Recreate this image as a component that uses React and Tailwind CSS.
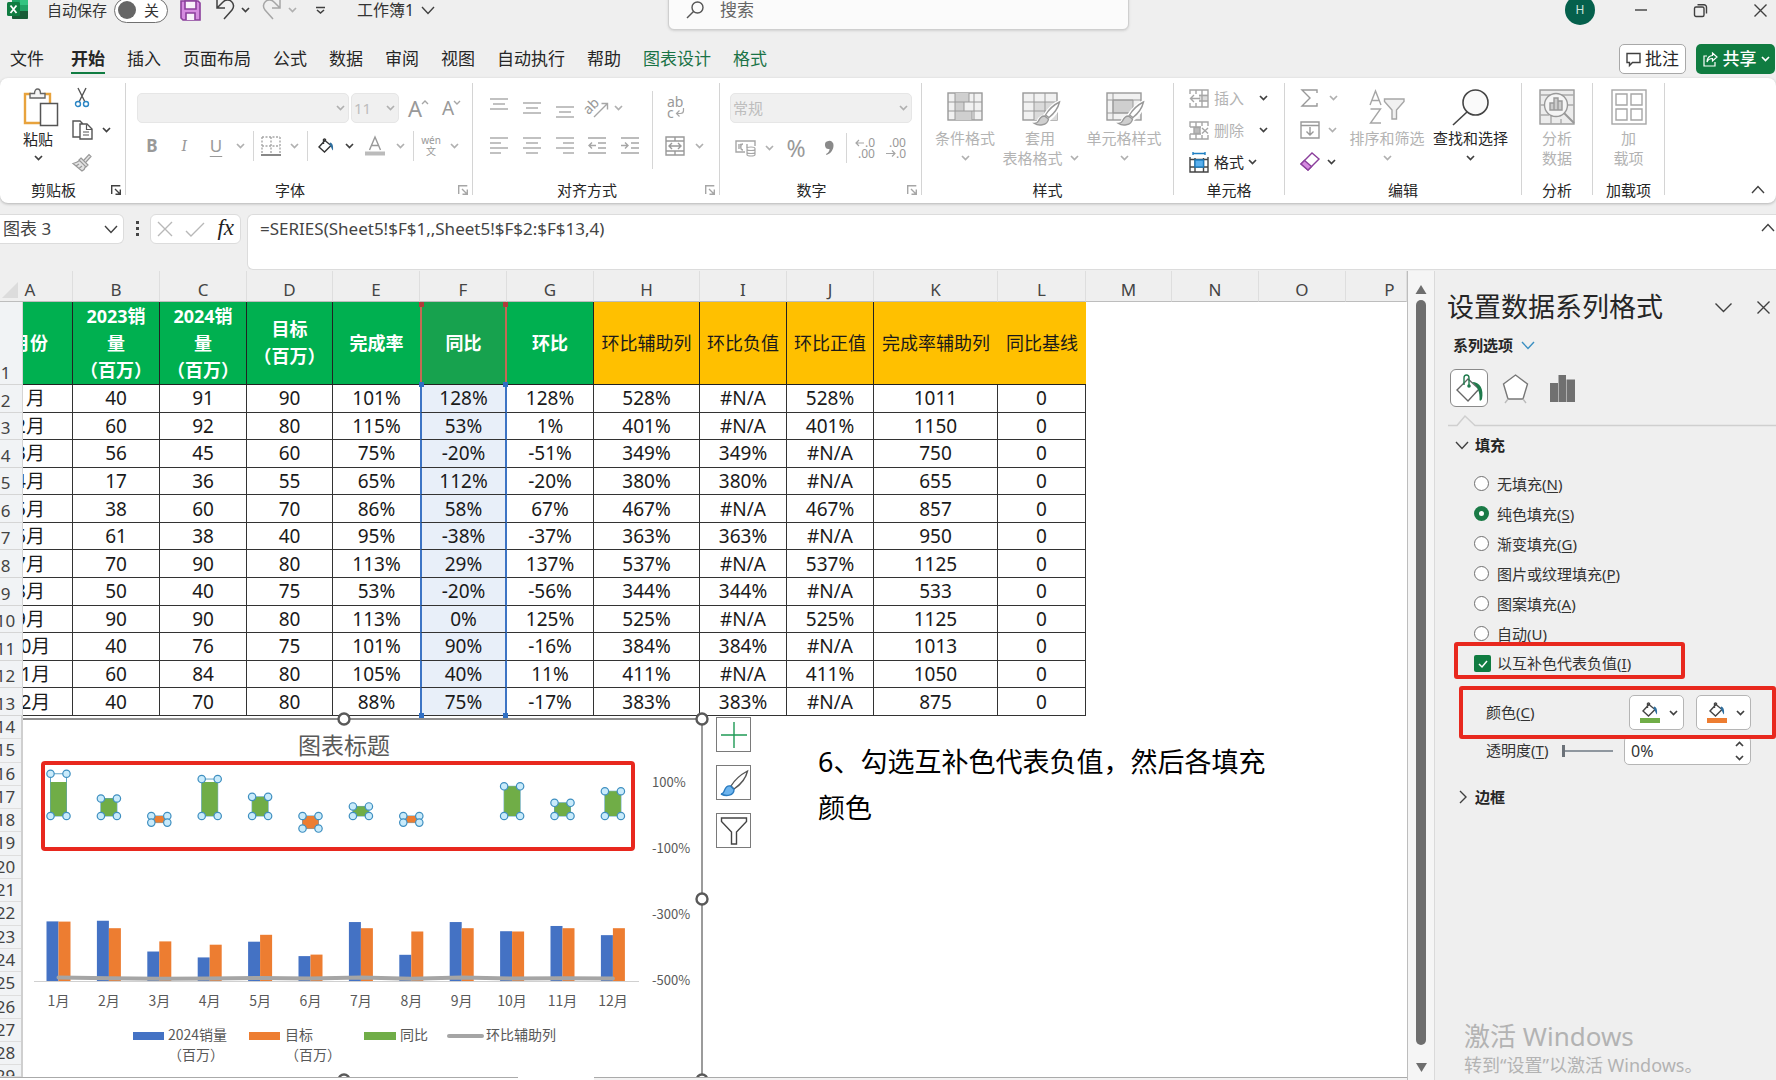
import React from "react";

const G = "#a6a6a6";
const D = "#404040";

function Svg({ w, h, children, className = "", vb }) {
  return (
    <svg
      width={w}
      height={h}
      viewBox={vb || `0 0 ${w} ${h}`}
      fill="none"
      stroke={G}
      strokeWidth="1.4"
      className={`shrink-0 overflow-visible ${className}`}
      aria-hidden="true"
    >
      {children}
    </svg>
  );
}

function Chev({ c = "#b0b0b0", big = false, up = false }) {
  const w = big ? 12 : 7;
  const h = big ? 7 : 4;
  return (
    <Svg w={w} h={h}>
      <path d={up ? `M0 ${h}L${w / 2} 0.5L${w} ${h}` : `M0 0L${w / 2} ${h - 0.5}L${w} 0`} stroke={c} strokeWidth={big ? 1.4 : 1.7} />
    </Svg>
  );
}

const Btn = ({ label, children, className = "" }) => (
  <button type="button" aria-label={label} className={`flex items-center justify-center ${className}`}>
    {children}
  </button>
);

const Sep = ({ className = "h-[30px]" }) => <span className={`w-px bg-[#d6d6d6] ${className}`} />;

function Group({ title, width, launcher, dark, children }) {
  return (
    <section aria-label={title} className={`flex h-[112px] shrink-0 flex-col border-r border-[#d4d4d4] ${width}`}>
      <div className="min-h-0 flex-1">{children}</div>
      <div className="flex h-[10px] items-center text-[15px] leading-[10px] text-[#262626]">
        <span className="flex-1 text-center">{title}</span>
        {launcher && (
          <Btn label={`${title}设置`} className="w-[18px]">
            <Svg w={10} h={10}>
              <path d="M0.7 9V0.7H9.3M4 4L9 9M9.3 4.5V9.3H4.5" stroke={dark ? D : G} />
            </Svg>
          </Btn>
        )}
      </div>
    </section>
  );
}

function BigButton({ icon, lines, chev, dark, width = "" }) {
  return (
    <button type="button" className={`flex flex-col items-center text-[15px] leading-5 whitespace-nowrap ${dark ? "text-[#262626]" : "text-[#b3b3b3]"} ${width}`}>
      <span className="mb-[3px] flex h-[37px] items-center">{icon}</span>
      <span>{lines[0]}</span>
      <span className="flex h-5 items-center gap-2">
        {lines[1]}
        {chev && <Chev c={dark ? D : "#b0b0b0"} />}
      </span>
    </button>
  );
}

function Lines({ rows, dy = 0 }) {
  return (
    <Svg w={18} h={18}>
      {rows.map(([a, b], i) => (
        <path key={i} d={`M${a} ${dy + i * 5 + 1}H${b}`} />
      ))}
    </Svg>
  );
}

const Bucket = ({ c = D }) => (
  <Svg w={17} h={17}>
    <path d="M7 2.5L1 9L6.5 14L13 7.5L7.5 3V1.5a1.5 1.5 0 0 0-2 0V6" stroke={c} />
    <path d="M12 4.5c2.500 .5 3.500 3 3 8-1.500-1-1.500-4-3.500-5.500z" fill="#2f6f9f" stroke="none" />
  </Svg>
);

/* ---------- title bar and tabs ---------- */

function TitleBar() {
  return (
    <header className="mb-5 grid h-5 grid-cols-[668fr_461fr_647fr] grid-rows-1 items-center text-[15px] text-[#333]">
      <div className="flex items-center">
        <Svg w={22} h={22} className="ml-[6px]">
          <path d="M6 -4h16v22a2 2 0 0 1-2 2H8a2 2 0 0 1-2-2z" fill="#21a366" stroke="none" />
          <path d="M14 -4h8v10h-8z" fill="#33c481" stroke="none" />
          <path d="M6 12h16v7a1 1 0 0 1-1 1H7a1 1 0 0 1-1-1z" fill="#185c37" stroke="none" />
          <rect x="1" y="3" width="13" height="14" rx="1.500" fill="#107c41" stroke="none" />
          <path d="M4.500 6.500l6 7.500M10.500 6.500l-6 7.500" stroke="#fff" strokeWidth="1.800" />
        </Svg>
        <label htmlFor="autosave" className="ml-[19px]">自动保存</label>
        <label className="relative ml-[7px] flex h-[25px] w-[54px] items-center justify-between rounded-full border border-[#707070] bg-white pr-2 pl-[3px]">
          <input id="autosave" type="checkbox" role="switch" className="peer sr-only" />
          <span className="size-[18px] rounded-full bg-[#666]" />
          <span>关</span>
        </label>
        <Btn label="保存" className="ml-3">
          <Svg w={21} h={21}>
            <path d="M1 1h17l2 2v17H3l-2-2z" fill="#d58be0" stroke="#8b3f9c" strokeWidth="1.600" />
            <path d="M5 1h11v8H5zM6 20v-7h9v7" fill="#f8f0fa" stroke="#8b3f9c" strokeWidth="1.600" />
          </Svg>
        </Btn>
        <Btn label="撤销" className="ml-[15px] gap-2">
          <Svg w={18} h={20}>
            <path d="M1 0V8H9M1 8L7 2a6 6 0 0 1 9 8L8 19" stroke={D} strokeWidth="1.500" />
          </Svg>
          <Chev c={D} />
        </Btn>
        <Btn label="恢复" className="ml-[14px] gap-2">
          <Svg w={18} h={20}>
            <path d="M17 0V8H9M17 8L11 2a6 6 0 0 0-9 8L10 19" strokeWidth="1.500" />
          </Svg>
          <Chev />
        </Btn>
        <Btn label="自定义快速访问工具栏" className="ml-5">
          <Svg w={9} h={7}>
            <path d="M0 0.500H9M1 3L4.500 6L8 3" stroke={D} strokeWidth="1.600" />
          </Svg>
        </Btn>
        <button type="button" className="ml-[32px] flex items-center gap-2 text-base whitespace-nowrap">
          工作簿1 <Chev big c={D} />
        </button>
      </div>
      <label className="flex h-10 items-center gap-4 rounded-md border border-[#cfcfcf] bg-[#fbfbfb] pl-[17px] text-[17px] shadow-sm">
        <Svg w={18} h={18}>
          <circle cx="11.500" cy="6.500" r="5.500" stroke="#555" />
          <path d="M7.500 10.500L1 17" stroke="#555" />
        </Svg>
        <input type="search" aria-label="搜索" placeholder="搜索" className="min-w-0 flex-1 bg-transparent outline-none placeholder:text-[#666]" />
      </label>
      <div className="flex items-center justify-end pr-[9px]">
        <span className="mr-[39px] flex size-[30px] items-center justify-center rounded-full bg-[#05604c] text-xs text-[#cfe6df]">H</span>
        <Btn label="最小化" className="mr-[46px]">
          <Svg w={14} h={14}><path d="M1 7H13" stroke={D} /></Svg>
        </Btn>
        <Btn label="还原" className="mr-[47px]">
          <Svg w={13} h={13}>
            <rect x="0.500" y="3" width="9.500" height="9.500" rx="1.500" stroke={D} />
            <path d="M3.500 .7H10a2.500 2.500 0 0 1 2.500 2.500V9.500" stroke={D} />
          </Svg>
        </Btn>
        <Btn label="关闭">
          <Svg w={13} h={13}><path d="M.5 .5L12.500 12.500M12.500 .5L.5 12.500" stroke={D} /></Svg>
        </Btn>
      </div>
    </header>
  );
}

const tabs = ["插入", "页面布局", "公式", "数据", "审阅", "视图", "自动执行", "帮助"];

function Tabs() {
  return (
    <nav className="flex h-[38px] items-center text-[17px] leading-[26px] whitespace-nowrap text-[#262626]">
      <a href="#file" className="mr-[27px] ml-[10px]">文件</a>
      <a href="#home" aria-current="page" className="mr-[22px] -mb-[2px] border-b-2 border-[#107c41] font-bold">开始</a>
      <div className="flex gap-[22px]">
        {tabs.map((t) => (
          <a key={t} href={`#${t}`}>{t}</a>
        ))}
        <a href="#design" className="text-[#1a7346]">图表设计</a>
        <a href="#format" className="text-[#1a7346]">格式</a>
      </div>
      <button type="button" className="mr-[10px] ml-auto flex h-[30px] w-[67px] items-center justify-center gap-1 rounded-[5px] border border-[#a8a8a8] bg-white">
        <Svg w={15} h={15}>
          <path d="M1 1.500H14V10.500H6.500L3.500 13.500V10.500H1z" stroke={D} />
        </Svg>
        批注
      </button>
      <button type="button" className="mr-px flex h-[30px] w-[79px] items-center justify-center gap-[5px] rounded-[5px] bg-[#107c41] font-medium text-white">
        <Svg w={15} h={15}>
          <path d="M4 4H1V14H12V10M9.500 1L14 5L9.500 9V6.500C7 6.500 5 7.500 4 10C4 6 6.500 3.500 9.500 3.500z" stroke="#fff" strokeWidth="1.200" />
        </Svg>
        共享
        <Chev c="#fff" />
      </button>
    </nav>
  );
}

/* ---------- ribbon ---------- */

const GridIcon = ({ brush, variant }) => (
  <Svg w={36} h={34}>
    <rect x="1" y="3" width="34" height="27" fill="#f1f1f1" stroke="#999" />
    {variant === "cond" && (
      <>
        <path d="M8 3h14v9H8zM8 12h9v9H8zM8 21h17v9H8z" fill="#cfcfcf" stroke="none" />
        <path d="M8 3V30M22 3V12H35M27 3V30M1 12H22M1 21H35M17 12V21M25 21V30" stroke="#999" strokeWidth="1" />
      </>
    )}
    {variant === "table" && (
      <>
        <path d="M12 12h23v18H12z" fill="#dadada" stroke="none" />
        <path d="M12 3V30M23 3V30M1 12H35M1 21H35" stroke="#999" strokeWidth="1" />
      </>
    )}
    {variant === "cell" && (
      <>
        <path d="M7 10h20v13H7z" fill="#cfcfcf" stroke="#999" strokeWidth="1" />
        <path d="M7 3V30M1 10H35M1 23H22" stroke="#999" strokeWidth="1" />
      </>
    )}
    {brush && (
      <>
        <path d="M38 12c-6 2-12 9-16 15-4 0-5 3-6 6-2 3-4 2-4 3 8 1 14 0 14-6 5-4 10-10 12-18z" fill="#fff" stroke="#fff" strokeWidth="4" />
        <path d="M37.500 12c-6 3-11 8-14 13l3.500 2.500c5-4 9-9 10.500-15.500z" fill="#fff" stroke="#999" />
        <path d="M22.500 26c-4 0-5 3-6 5-1 2-2.500 2.500-4 2.500 3 2 13 3 14-4.500z" fill="#cfcfcf" stroke="#999" />
      </>
    )}
  </Svg>
);

function CellIcon({ kind }) {
  const blue = kind === "format";
  const c = blue ? "#444" : G;
  return (
    <Svg w={20} h={19}>
      {kind === "insert" && (
        <>
          <path d="M10 5.500h9v7h-9z" fill="#dcdcdc" stroke="none" />
          <path d="M1 5V1H19V18H1V14M7 1V5M7 14V18M13 1V18M10 6.500H19M10 12H19" stroke={c} />
          <path d="M11 9.500H1.500M5 6L1.500 9.500L5 13" stroke={c} />
        </>
      )}
      {kind === "delete" && (
        <>
          <path d="M1 6V1H19V5M1 6H12M1 13V18H19V14M1 13H12M7 1V6M13 1V5M7 13V18M13 14V18" stroke={c} />
          <path d="M5 6.500h6v6H5z" fill="#bbb" stroke={c} />
          <path d="M13 7l6 5.500M19 7l-6 5.500" stroke={c} />
        </>
      )}
      {blue && (
        <>
          <path d="M1 4V19H19V4M1 6.500H19M1 14H19M6 5V19M14.500 5V19" stroke={c} />
          <path d="M6 7h8.500v7H6z" fill="#5bb0ee" stroke="#1e7fc2" />
          <path d="M4 .5H16M4 -1V2M16 -1V2" stroke="#1e7fc2" />
        </>
      )}
    </Svg>
  );
}

function Ribbon() {
  return (
    <div className="flex h-[125px] rounded-lg bg-white pt-[5px] shadow-[0_1px_3px_rgba(0,0,0,0.25)]">
      <Group title="剪贴板" width="w-[126px]" launcher dark>
        <div className="flex">
          <div className="pt-[5px] pl-[23px]">
            <button type="button" className="flex w-9 flex-col items-start text-[15px] leading-5 text-[#262626]">
              <Svg w={36} h={38} className="mb-[3px]">
                <path d="M8 6H2V35H17M21 6h6v9" stroke="#e8a33d" strokeWidth="2.400" />
                <path d="M7 10V5.500h4.500C11.500 2.500 13 1 14.500 1S17.500 2.500 17.500 5.500H22V10z" fill="#f5f5f5" stroke="#666" />
                <rect x="17.500" y="15.500" width="17" height="22" fill="#fff" stroke="#555" strokeWidth="1.500" />
              </Svg>
              <span>粘贴</span>
              <span className="flex h-[18px] w-[31px] items-center justify-center"><Chev c={D} /></span>
            </button>
          </div>
          <div className="-mt-px ml-[11px] flex flex-col items-start">
            <Btn label="剪切" className="h-8 w-6">
              <Svg w={14} h={20}>
                <path d="M3 0L10 14M11 0L4 14" stroke="#555" />
                <circle cx="3" cy="16" r="2.500" stroke="#2b86c5" />
                <circle cx="11" cy="16" r="2.500" stroke="#2b86c5" />
              </Svg>
            </Btn>
            <Btn label="复制" className="h-8 gap-[10px]">
              <Svg w={21} h={20} className="ml-[2px]">
                <path d="M8 17H1V1H8L11 4M8 4H15L20 9V19H8z" stroke="#555" />
                <path d="M14.500 4.500V9.500H20M11 12H17M11 15H17" stroke="#555" strokeWidth="1.200" />
              </Svg>
              <Chev c={D} />
            </Btn>
            <Btn label="格式刷" className="h-8 w-6">
              <Svg w={20} h={19}>
                <path d="M12 7L17 1.500L19 3.500L14 9M9 5L16 12L14 14L7 7zM7.500 7.500C5 9.500 3 10 1 10.500L10 18C12 17 13 15.500 13.500 13.500M4 13L7 11M7 15.500L10 13" fill="#e3e3e3" stroke="#999" strokeWidth="1.200" />
              </Svg>
            </Btn>
          </div>
        </div>
      </Group>

      <Group title="字体" width="w-[347px]" launcher>
        <div className="flex h-10 items-center pt-[10px] pl-[11px]">
          <Combo label="字体" value="" width="w-[212px]" />
          <Combo label="字号" value="11" width="ml-[2px] w-12" />
          <Btn label="增大字号" className="ml-[9px] items-start text-[22px] leading-6 text-[#999]">A<Svg w={6} h={5} className="mt-1"><path d="M0 4L3 1L6 4" /></Svg></Btn>
          <Btn label="减小字号" className="ml-[14px] items-start text-[19px] leading-6 text-[#999]">A<Svg w={6} h={5} className="mt-1"><path d="M0 1L3 4L6 1" /></Svg></Btn>
        </div>
        <div className="mt-2 grid h-[30px] grid-cols-[32px_32px_32px_16px_10px_26px_20px_6px_32px_14px_38px_12px_14px_22px_24px] place-items-center pl-[10px] text-[17px] text-[#999]">
          <Btn label="加粗" className="font-bold">B</Btn>
          <Btn label="倾斜" className="font-serif italic">I</Btn>
          <Btn label="下划线" className="underline underline-offset-4">U</Btn>
          <Chev />
          <Sep />
          <Btn label="边框">
            <Svg w={20} h={20}>
              <path d="M1 1H19M1 10H19M1 1V18M10 1V18M19 1V18" strokeDasharray="2 1.500" />
              <path d="M0 19H20" stroke="#888" strokeWidth="2" />
            </Svg>
          </Btn>
          <Chev />
          <Sep />
          <Btn label="填充颜色"><Bucket c="#333" /></Btn>
          <Chev c={D} />
          <Btn label="字体颜色">
            <Svg w={20} h={20}>
              <path d="M4.500 14L10 1L15.500 14M6.500 9.500H13.500" stroke="#999" />
              <path d="M0 17.500H20" stroke="#bbb" strokeWidth="4" />
            </Svg>
          </Btn>
          <Chev />
          <Sep />
          <Btn label="拼音指南" className="flex-col text-[10px] leading-[11px]"><span>wén</span><span>文</span></Btn>
          <Chev />
        </div>
      </Group>

      <Group title="对齐方式" width="w-[247px]" launcher>
        <div className="flex">
          <div className="pt-[10px] pl-[10px]">
            <div className="grid h-[30px] grid-cols-[32px_33px_33px_32px_10px] place-items-center">
              <Btn label="顶端对齐"><Lines rows={[[0, 18], [3, 15], [0, 18]]} dy={-1} /></Btn>
              <Btn label="垂直居中"><Lines rows={[[0, 18], [3, 15], [0, 18]]} dy={3} /></Btn>
              <Btn label="底端对齐"><Lines rows={[[0, 18], [3, 15], [0, 18]]} dy={7} /></Btn>
              <Btn label="方向">
                <Svg w={21} h={20}>
                  <text x="-2" y="13" transform="rotate(-45 5 11)" fill="#999" stroke="none" fontSize="14" fontFamily="Noto Sans">ab</text>
                  <path d="M7 19L20 6M14.500 5.500H20.500V11.500" />
                </Svg>
              </Btn>
              <Chev />
            </div>
            <div className="mt-2 grid h-[30px] grid-cols-[32px_33px_33px_32px_33px] place-items-center">
              <Btn label="左对齐"><Lines rows={[[0, 18], [0, 11], [0, 18], [0, 11]]} /></Btn>
              <Btn label="居中"><Lines rows={[[0, 18], [3, 15], [0, 18], [3, 15]]} /></Btn>
              <Btn label="右对齐"><Lines rows={[[0, 18], [7, 18], [0, 18], [7, 18]]} /></Btn>
              <Btn label="减少缩进量">
                <Svg w={18} h={18}><path d="M0 1H18M10 6H18M10 11H18M0 16H18M8 8.500H1M4 5.500L1 8.500L4 11.500" /></Svg>
              </Btn>
              <Btn label="增加缩进量">
                <Svg w={18} h={18}><path d="M0 1H18M10 6H18M10 11H18M0 16H18M0 8.500H7M4 5.500L7 8.500L4 11.500" /></Svg>
              </Btn>
            </div>
          </div>
          <Sep className="mt-2 ml-[6px] h-[78px]" />
          <div className="pt-[10px] pl-[10px]">
            <Btn label="自动换行" className="h-[30px] w-[26px]">
              <Svg w={18} h={22}>
                <text x="0" y="10" fill="#999" stroke="none" fontSize="14" fontFamily="Noto Sans">ab</text>
                <text x="0" y="21" fill="#999" stroke="none" fontSize="14" fontFamily="Noto Sans">c</text>
                <path d="M16.500 11v2.500q0 3-3 3H9.500M12.500 13.500L9.500 16.500L12.500 19.500" strokeWidth="1.200" />
              </Svg>
            </Btn>
            <div className="mt-2 flex h-[30px] items-center">
              <Btn label="合并后居中" className="w-6 gap-3">
                <Svg w={20} h={20}>
                  <path d="M1 1H19V19H1zM1 5H19M1 15H19M10 1V5M10 15V19M4 10H16M7 7L4 10L7 13M13 7L16 10L13 13" stroke="#999" />
                </Svg>
              </Btn>
              <span className="ml-[9px]"><Chev /></span>
            </div>
          </div>
        </div>
      </Group>

      <Group title="数字" width="w-[202px]" launcher>
        <div className="flex h-10 items-center pt-[10px] pl-[10px]">
          <Combo label="数字格式" value="常规" width="w-[182px]" />
        </div>
        <div className="mt-2 grid h-[30px] grid-cols-[30px_18px_36px_30px_4px_33px_30px] place-items-center pl-[10px] text-[#999]">
          <Btn label="会计数字格式">
            <Svg w={21} h={17}>
              <path d="M10 12H1V1H20V6M4 4v5M7 4.500H5M8 10c-3 0-3-6 0-6M12 4v4" />
              <path d="M12 8.500c0-2 8-2 8 0v6c0 2-8 2-8 0zM12 9c0 2 8 2 8 0M12 12c0 2 8 2 8 0" fill="#fff" strokeWidth="1.200" />
            </Svg>
          </Btn>
          <Chev />
          <Btn label="百分比样式" className="text-[23px]">%</Btn>
          <Btn label="千位分隔样式">
            <Svg w={10} h={16}>
              <path d="M4.500 1a4 4 0 0 1 5 4.500c0 4-2.500 8-7 9.500l-.5-1c2.500-1.200 3.500-3 3.500-5A4 4 0 0 1 4.500 1z" fill="#8a8a8a" stroke="none" />
            </Svg>
          </Btn>
          <Sep />
          <Btn label="增加小数位数">
            <Svg w={20} h={20}>
              <path d="M9 5H1M4 2L1 5L4 8" strokeWidth="1.200" />
              <text x="10" y="9" fill="#999" stroke="none" fontSize="12" fontFamily="Noto Sans">.0</text>
              <text x="3" y="20" fill="#999" stroke="none" fontSize="12" fontFamily="Noto Sans">.00</text>
            </Svg>
          </Btn>
          <Btn label="减少小数位数">
            <Svg w={20} h={20}>
              <path d="M0 15.500H9M6 12.500L9 15.500L6 18.500" strokeWidth="1.200" />
              <text x="3" y="9" fill="#999" stroke="none" fontSize="12" fontFamily="Noto Sans">.00</text>
              <text x="10" y="20" fill="#999" stroke="none" fontSize="12" fontFamily="Noto Sans">.0</text>
            </Svg>
          </Btn>
        </div>
      </Group>

      <Group title="样式" width="w-[252px]">
        <div className="flex pt-[5px] pl-[12px]">
          <BigButton icon={<GridIcon variant="cond" />} lines={["条件格式"]} chev width="w-[62px]" />
          <BigButton icon={<GridIcon variant="table" brush />} lines={["套用", "表格格式"]} chev width="w-[88px]" />
          <BigButton icon={<GridIcon variant="cell" brush />} lines={["单元格样式"]} chev width="w-[80px]" />
        </div>
      </Group>

      <Group title="单元格" width="w-[111px]">
        <div className="-mt-px flex flex-col pl-[15px] text-[15px]">
          {[["insert", "插入", "gap-4"], ["delete", "删除", "gap-4"], ["format", "格式", "gap-[5px] text-[#262626]"]].map(([k, t, cls]) => (
            <button key={k} type="button" className="flex h-8 items-center gap-[5px] text-[#b3b3b3]">
              <CellIcon kind={k} />
              <span className={`flex items-center ${cls}`}>{t}<Chev c={D} /></span>
            </button>
          ))}
        </div>
      </Group>

      <Group title="编辑" width="w-[237px]">
        <div className="flex">
          <div className="-mt-px flex w-[60px] flex-col pl-[15px]">
            <Btn label="求和" className="h-8 justify-start gap-[10px]">
              <Svg w={20} h={18}><path d="M17 4V1H2L10 9L2 17H17V14" stroke="#999" /></Svg>
              <Chev />
            </Btn>
            <Btn label="填充" className="h-8 justify-start gap-[9px]">
              <Svg w={20} h={18}><path d="M1 1H19V17H1zM1 4.500H19M10 6V14M6.500 10.500L10 14L13.500 10.500" stroke="#999" /></Svg>
              <Chev />
            </Btn>
            <Btn label="清除" className="h-8 justify-start gap-2">
              <Svg w={20} h={20}>
                <path d="M1 12L12 1L19 7L8 18z" fill="#fff" stroke="#8b3f9c" />
                <path d="M1 12L4.500 8.500L11.500 14.500L8 18z" fill="#d58be0" stroke="#8b3f9c" />
              </Svg>
              <Chev c={D} />
            </Btn>
          </div>
          <div className="flex pt-[5px]">
            <BigButton
              icon={
                <Svg w={36} h={34}>
                  <path d="M1 15L6.500 1L12 15M3 10.500H10M1.500 19H11.500L1.500 33H12" />
                  <path d="M15.500 9H35V11.500L27.500 20V29H23V20L15.500 11.500z" fill="#f1f1f1" />
                </Svg>
              }
              lines={["排序和筛选"]}
              chev
              width="w-[84px]"
            />
            <BigButton
              dark
              icon={
                <Svg w={36} h={36}>
                  <circle cx="22.500" cy="13.500" r="12.500" fill="#fafafa" stroke="#444" strokeWidth="1.600" />
                  <path d="M14 23L0 36" stroke="#444" strokeWidth="1.600" />
                </Svg>
              }
              lines={["查找和选择"]}
              chev
              width="w-[83px]"
            />
          </div>
        </div>
      </Group>

      <Group title="分析" width="w-[71px]">
        <div className="flex justify-center pt-[5px]">
          <BigButton
            icon={
              <Svg w={36} h={36}>
                <rect x="1" y="1" width="34" height="34" fill="#ececec" stroke="#999" />
                <path d="M1 6H35M1 16H6M29 16H35M1 26H10M12 27V35M22 30V35" stroke="#aaa" />
                <circle cx="17" cy="16" r="11.500" fill="#f5f5f5" stroke="#999" />
                <path d="M25 24L35 34" stroke="#999" strokeWidth="2" />
                <path d="M11 14h4v7h-4zM15 9h4v12h-4zM19 12h4v9h-4z" fill="#ccc" stroke="#999" />
              </Svg>
            }
            lines={["分析", "数据"]}
          />
        </div>
      </Group>

      <Group title="加载项" width="w-[72px]">
        <div className="flex justify-center pt-[5px]">
          <BigButton
            icon={
              <Svg w={36} h={36}>
                <rect x="1" y="1" width="34" height="34" />
                <path d="M5 5h11v11H5zM20 5h11v11H20zM5 20h11v11H5zM20 20h11v11H20z" />
              </Svg>
            }
            lines={["加", "载项"]}
          />
        </div>
      </Group>

      <Btn label="折叠功能区" className="mr-3 mb-[10px] ml-auto self-end">
        <Chev big up c={D} />
      </Btn>
    </div>
  );
}

function Combo({ label, value, width }) {
  return (
    <span className={`flex h-[30px] items-center rounded-[5px] border border-[#e6e6e6] bg-[#f0f0f0] pr-1 ${width}`}>
      <select aria-label={label} disabled defaultValue={value} className="min-w-0 flex-1 appearance-none bg-transparent pl-[2px] text-[15px] text-[#bdbdbd] opacity-100 outline-none">
        <option value={value}>{value}</option>
      </select>
      <Chev />
    </span>
  );
}

function FormulaBar() {
  return (
    <div className="flex h-[68px] items-start pt-[11px] text-[17px] text-[#444]">
      <div className="flex h-[30px] w-[124px] items-center rounded-r-md border border-l-0 border-[#dcdcdc] bg-white pr-[6px]">
        <input aria-label="名称框" defaultValue="图表 3" className="min-w-0 flex-1 pl-[3px] outline-none" />
        <Btn label="名称列表"><Chev big c={D} /></Btn>
      </div>
      <Svg w={3} h={30} className="mx-3">
        <path d="M0 8.500H3M0 14.500H3M0 20.500H3" stroke="#444" strokeWidth="3" />
      </Svg>
      <div className="-ml-px flex h-[30px] w-[91px] items-center justify-between rounded-md border border-[#dcdcdc] bg-white px-[6px]">
        <Btn label="取消"><Svg w={16} h={16}><path d="M1 1L15 15M15 1L1 15" stroke="#b8b8b8" /></Svg></Btn>
        <Btn label="输入"><Svg w={20} h={15}><path d="M1 9L6 14L19 1" stroke="#b8b8b8" /></Svg></Btn>
        <Btn label="插入函数" className="pb-1 font-['Liberation_Serif',serif] text-[23px] leading-none text-[#222] italic">fx</Btn>
      </div>
      <div className="ml-[6px] flex h-[56px] flex-1 items-start rounded-l-md border border-r-0 border-[#dcdcdc] bg-white pr-[2px]">
        <input aria-label="编辑栏" defaultValue="=SERIES(Sheet5!$F$1,,Sheet5!$F$2:$F$13,4)" className="h-[27px] min-w-0 flex-1 pl-3 outline-none" />
        <Btn label="折叠编辑栏" className="mt-[9px]"><Chev big up c={D} /></Btn>
      </div>
    </div>
  );
}

/* ---------- sheet ---------- */

const letters = "ABCDEFGHIJKLMNOP".split("");
const widths = ["w-[50px]", "w-[87px]", "w-[87px]", "w-[86px]", "w-[87px]", "w-[87px]", "w-[87px]", "w-[106px]", "w-[87px]", "w-[87px]", "w-[124px]", "w-[88px]", "w-[86px]", "w-[87px]", "w-[87px]", ""];
const heads = [["月份"], ["2023销", "量", "（百万）"], ["2024销", "量", "（百万）"], ["目标", "（百万）"], ["完成率"], ["同比"], ["环比"], ["环比辅助列"], ["环比负值"], ["环比正值"], ["完成率辅助列"], ["同比基线"]];
const NA = "#N/A";
const data = [
  ["1月", 40, 91, 90, "101%", "128%", "128%", "528%", NA, "528%", 1011, 0],
  ["2月", 60, 92, 80, "115%", "53%", "1%", "401%", NA, "401%", 1150, 0],
  ["3月", 56, 45, 60, "75%", "-20%", "-51%", "349%", "349%", NA, 750, 0],
  ["4月", 17, 36, 55, "65%", "112%", "-20%", "380%", "380%", NA, 655, 0],
  ["5月", 38, 60, 70, "86%", "58%", "67%", "467%", NA, "467%", 857, 0],
  ["6月", 61, 38, 40, "95%", "-38%", "-37%", "363%", "363%", NA, 950, 0],
  ["7月", 70, 90, 80, "113%", "29%", "137%", "537%", NA, "537%", 1125, 0],
  ["8月", 50, 40, 75, "53%", "-20%", "-56%", "344%", "344%", NA, 533, 0],
  ["9月", 90, 90, 80, "113%", "0%", "125%", "525%", NA, "525%", 1125, 0],
  ["10月", 40, 76, 75, "101%", "90%", "-16%", "384%", "384%", NA, 1013, 0],
  ["11月", 60, 84, 80, "105%", "40%", "11%", "411%", NA, "411%", 1050, 0],
  ["12月", 40, 70, 80, "88%", "75%", "-17%", "383%", "383%", NA, 875, 0],
];

const RowNo = ({ n }) => <div className="-ml-3 w-[35px] text-center text-[17px] leading-[22px] font-normal text-[#444]">{n}</div>;

const Handles = ({ color, top }) => (
  <>
    <i className={`absolute -left-[3px] z-10 size-[5px] ${top ? "top-0" : "-bottom-[3px]"} ${color}`} />
    <i className={`absolute -right-[3px] z-10 size-[5px] ${top ? "top-0" : "-bottom-[3px]"} ${color}`} />
  </>
);

function SheetTable() {
  return (
    <table className="h-[445px] w-full shrink-0 table-fixed border-separate border-spacing-0 text-center text-[18px] leading-5 text-[#1a1a1a]">
      <colgroup>
        <col className="w-[23px]" />
        {widths.map((w, i) => (
          <col key={i} className={w} />
        ))}
      </colgroup>
      <thead>
        <tr className="text-[17px] text-[#444]">
          <th aria-label="全选" className="h-[31px] border-b border-[#bdbdbd] bg-[#efefef] align-bottom">
            <Svg w={20} h={17} className="mb-[2px]"><path d="M18 0V16H2z" fill="#dcdcdc" stroke="none" /></Svg>
          </th>
          {letters.map((l, i) => (
            <th key={l} scope="col" className="h-[31px] overflow-hidden border-r border-b border-r-[#dedede] border-b-[#bdbdbd] bg-[#efefef] pt-2 font-normal">
              <div className={i === 0 ? "-ml-9 w-[86px]" : i === 15 ? "w-[87px]" : ""}>{l}</div>
            </th>
          ))}
        </tr>
      </thead>
      <tbody>
        <tr>
          <th scope="row" className="h-[83px] overflow-hidden border-r border-b border-[#d5d5d5] bg-[#f1f3f5] align-bottom"><RowNo n={1} /></th>
          {heads.map((h, i) => (
            <th
              key={i}
              scope="col"
              className={`h-[83px] border-b border-b-[#222] leading-[27px] whitespace-nowrap ${
                i === 5 ? "relative border-x-2 border-x-[#c46a55] bg-[#17a24e] font-bold text-white" : i < 7 ? "bg-[#00b050] font-bold text-white" : "bg-[#ffc000] font-normal"
              } ${i === 0 ? "overflow-hidden" : ""} ${i !== 5 && i !== 4 && i < 10 ? "border-r border-r-[#222]" : ""}`}
            >
              <div className={i === 0 ? "-ml-9 w-[86px]" : "-mx-2"}>
                {h.map((t) => (
                  <div key={t}>{t}</div>
                ))}
              </div>
              {i === 5 && <><Handles top color="bg-[#b03a3a]" /><Handles color="bg-[#2f6fc4]" /></>}
            </th>
          ))}
          <td colSpan={4} className="bg-white" />
        </tr>
        {data.map((row, r) => (
          <tr key={r}>
            <th scope="row" className="overflow-hidden border-r border-b border-[#d5d5d5] bg-[#f1f3f5] align-bottom"><RowNo n={r + 2} /></th>
            {row.map((v, i) => (
              <td
                key={i}
                className={`border-b border-b-[#333] text-[19px] ${i === 5 ? "relative border-x-2 border-x-[#3d74c4] bg-[#e8eff9]" : "bg-white"} ${
                  i === 0 ? "overflow-hidden" : ""
                } ${i !== 5 && i !== 4 ? "border-r border-r-[#333]" : ""}`}
              >
                <div className={i === 0 ? "-ml-9 w-[86px]" : ""}>{v}</div>
                {i === 5 && r === 11 && <Handles color="bg-[#2f6fc4]" />}
              </td>
            ))}
            <td colSpan={4} className="bg-white" />
          </tr>
        ))}
      </tbody>
    </table>
  );
}

function Chart() {
  const cx = (i) => 58.5 + i * 50.4;
  const pct = (s) => parseInt(s, 10);
  return (
    <svg width="690" height="361" viewBox="23 716 690 361" className="relative shrink-0 overflow-visible font-['Noto_Sans_CJK_SC',sans-serif]" role="img" aria-label="图表标题">
      <path d="M23 719H702" stroke="#8f8f8f" strokeWidth="2" />
      <path d="M702 719V1080" stroke="#7a7a7a" strokeWidth="1.500" />
      <text x="344" y="754" textAnchor="middle" fontSize="23" fill="#595959">图表标题</text>
      <path d="M34 981.500H639" stroke="#d0d0d0" />
      {data.map((row, i) => {
        const v = pct(row[5]);
        const x = cx(i);
        const top = v > 0 ? 816 - v * 0.33 : 816;
        const bottom = v > 0 ? 816 : 816 - v * 0.33;
        const fillTop = Math.max(top, 782);
        return (
          <g key={i}>
            {v !== 0 && (
              <g stroke="#5fa3c7">
                <rect x={x - 8} y={top} width="16" height={bottom - top} fill="#fff" />
                <rect x={x - 8} y={fillTop} width="16" height={bottom - fillTop} fill={v > 0 ? "#70ad47" : "#ed7d31"} stroke="none" />
                {[-8, 8].map((dx) => [top, bottom].map((y) => <circle key={dx + "-" + y} cx={x + dx} cy={y} r="3.700" fill="#c9ebfb" stroke="#3f8fc0" strokeWidth="1.200" />))}
              </g>
            )}
            <rect x={x - 12} y={981 - row[2] * 0.655} width="12" height={row[2] * 0.655} fill="#4472c4" />
            <rect x={x} y={981 - row[3] * 0.66} width="12" height={row[3] * 0.66} fill="#ed7d31" />
            <text x={x} y="1006" textAnchor="middle" fontSize="14" fill="#595959">{row[0]}</text>
          </g>
        );
      })}
      <polyline points={data.map((row, i) => `${cx(i)},${981 - pct(row[7]) * 0.0066}`).join(" ")} fill="none" stroke="#a5a5a5" strokeWidth="4" strokeLinecap="round" />
      {[100, -100, -300, -500].map((v, i) => (
        <text key={v} x="652" y={787 + i * 66} fontSize="13" fill="#595959">{v}%</text>
      ))}
      <g fontSize="14" fill="#595959">
        <rect x="133" y="1032" width="31" height="8" fill="#4472c4" />
        <text x="168" y="1040">2024销量</text>
        <text x="168" y="1060">（百万）</text>
        <rect x="249" y="1032" width="31" height="8" fill="#ed7d31" />
        <text x="285" y="1040">目标</text>
        <text x="285" y="1060">（百万）</text>
        <rect x="364" y="1032" width="32" height="8" fill="#70ad47" />
        <text x="400" y="1040">同比</text>
        <path d="M449 1036H482" stroke="#a5a5a5" strokeWidth="4" strokeLinecap="round" />
        <text x="486" y="1040">环比辅助列</text>
      </g>
      <rect x="43" y="763" width="590" height="86" rx="2" fill="none" stroke="#e8281e" strokeWidth="4" />
      {[[344, 719], [702, 719], [702, 899], [344, 1080], [702, 1080]].map(([x, y]) => (
        <circle key={`${x}-${y}`} cx={x} cy={y} r="5.500" fill="#fff" stroke="#595959" strokeWidth="2.400" />
      ))}
    </svg>
  );
}

function SheetBody() {
  const rows = Array.from({ length: 16 }, (_, i) => 14 + i);
  const tool = "flex size-[35px] items-center justify-center border border-[#7a7a7a] bg-white";
  return (
    <div className="flex min-h-0 flex-1 bg-white">
      <ol className="flex w-[23px] shrink-0 flex-col overflow-hidden border-r-2 border-[#cfcfcf] bg-[#f1f3f5]">
        {rows.map((n) => (
          <li key={n} className={`min-h-0 overflow-hidden border-b border-[#dedede] ${n === 29 ? "flex-[11_1_0%]" : "flex-[23_1_0%]"}`}>
            <RowNo n={n} />
          </li>
        ))}
      </ol>
      <Chart />
      <div className="relative mt-px ml-[3px] flex shrink-0 flex-col gap-[13px]">
        <button type="button" aria-label="图表元素" className={tool}>
          <Svg w={26} h={26}><path d="M0 13H26M13 0V26" stroke="#1f9a55" /></Svg>
        </button>
        <button type="button" aria-label="图表样式" className={tool}>
          <Svg w={28} h={26}>
            <path d="M27.500 1C20 5 14 11 11 16L14 19C20 15 26 8 27.500 1z" fill="#fff" stroke="#555" />
            <path d="M10.500 16C6 15 5 19 4 21.500C3 24 1.500 24 1 24C6 26.500 14 26 14 19.500z" fill="#6db4ee" stroke="#2b7cc0" />
          </Svg>
        </button>
        <button type="button" aria-label="图表筛选器" className={tool}>
          <Svg w={26} h={27}><path d="M0.500 1H25.500V4.500L15.500 15V27H10.500V15L0.500 4.500z" stroke="#444" /></Svg>
        </button>
      </div>
      <p className="mt-[23px] ml-[67px] w-[460px] text-[27px] leading-[46px] text-black">6、勾选互补色代表负值，然后各填充颜色</p>
    </div>
  );
}

/* ---------- format pane ---------- */

const fills = [["无填充", "N"], ["纯色填充", "S"], ["渐变填充", "G"], ["图片或纹理填充", "P"], ["图案填充", "A"], ["自动", "U"]];

const Key = ({ k }) => <>(<u className="underline-offset-2">{k}</u>)</>;

function ColorButton({ label, bar }) {
  return (
    <button type="button" aria-label={label} className="flex h-[35px] w-[55px] items-center justify-end gap-[10px] rounded-[5px] border border-[#b5b5b5] bg-white pr-[6px]">
      <span className="flex flex-col items-center">
        <Bucket c="#444" />
        <span className={`-mt-px h-[5px] w-5 ${bar}`} />
      </span>
      <Chev c={D} />
    </button>
  );
}

function Pane() {
  return (
    <aside className="flex w-[342px] shrink-0 flex-col border-l border-[#dadada] bg-[#efefef] text-[15px] text-[#333]">
      <div className="mt-[16px] flex h-10 items-center pr-[6px] pl-3">
        <h2 className="flex-1 text-[27px] whitespace-nowrap text-[#262626]">设置数据系列格式</h2>
        <Btn label="窗格选项" className="mr-[25px]">
          <Svg w={17} h={9}><path d="M.5 .5L8.500 8.500L16.500 .5" stroke={D} /></Svg>
        </Btn>
        <Btn label="关闭窗格"><Svg w={13} h={13}><path d="M.5 .5L12.500 12.500M12.500 .5L.5 12.500" stroke={D} /></Svg></Btn>
      </div>
      <button type="button" className="mt-[7px] ml-[18px] flex h-[22px] items-center gap-[9px] self-start font-bold text-[#262626]">
        系列选项 <Chev big c="#3a8fc2" />
      </button>
      <div className="mt-[13px] flex items-center pl-[15px]">
        <Btn label="填充与线条" className="size-[38px] rounded-md border border-[#8a8a8a] bg-white">
          <Svg w={27} h={27}>
            <path d="M12 4L1 15L12 26L23 14z" stroke="#666" />
            <path d="M8 10V3C8 -1 13 -1 13 3V11" stroke="#1f7a4c" />
            <circle cx="13" cy="11" r="1.800" fill="#1f7a4c" stroke="none" />
            <path d="M16 7C24 7 28 14 26 24C25 26 24 26 23.500 25C24 18 22 11 16 7z" fill="#1f7a4c" stroke="none" />
          </Svg>
        </Btn>
        <Btn label="效果" className="ml-[15px]">
          <Svg w={25} h={29}>
            <path d="M12.500 1L24.500 10L20 25H5L.5 10z" fill="#fff" stroke="#777" />
            <path d="M5 25L2 29M20 25L23 29" stroke="#bbb" />
          </Svg>
        </Btn>
        <Btn label="系列选项" className="ml-[22px]">
          <Svg w={25} h={27}><path d="M0 8H8V27H0zM8.500 0H16V27H8.500zM16.500 4.500H25V27H16.500z" fill="#707070" stroke="none" /></Svg>
        </Btn>
      </div>
      <svg width="100%" height="12" className="mt-[8px] ml-[13px] overflow-visible" fill="none" stroke="#cfcfcf" aria-hidden="true">
        <path d="M0 10.500H9L17 1L27 10.500H329" strokeWidth="1.500" />
      </svg>
      <h3 className="mt-[7px] font-bold text-[#262626]">
        <button type="button" className="flex h-[22px] items-center gap-[7px] pl-[21px]"><Chev big c={D} />填充</button>
      </h3>
      <fieldset className="mt-[13px] pl-[39px]">
        <legend className="sr-only">填充</legend>
        {fills.map(([t, k]) => (
          <label key={k} className="flex h-[30px] items-center gap-2">
            <input
              type="radio"
              name="fill"
              defaultChecked={k === "S"}
              className="-mt-[2px] size-[15px] appearance-none rounded-full border-[1px] border-[#707070] bg-white checked:border-[5px] checked:border-[#1a7a46]"
            />
            <span>{t}<Key k={k} /></span>
          </label>
        ))}
      </fieldset>
      <div className="relative -mt-[7px] ml-[19px] flex h-[37px] w-[231px] items-center rounded-[3px] border-4 border-[#e8281e] pt-[6px] pl-4">
        <label className="flex items-center gap-[6px]">
          <span className="relative flex">
            <input type="checkbox" defaultChecked className="size-[17px] appearance-none rounded-[2px] bg-[#107c41]" />
            <Svg w={10} h={8} className="absolute top-[5px] left-[4px]"><path d="M1 4L4 7L9 1" stroke="#fff" strokeWidth="1.500" /></Svg>
          </span>
          <span>以互补色代表负值<Key k="I" /></span>
        </label>
      </div>
      <div className="relative z-10 mt-[7px] ml-6 flex h-[53px] items-center gap-3 rounded-[3px] border-4 border-[#e8281e] pr-[21px] pl-[23px]">
        <span className="flex-1">颜色<Key k="C" /></span>
        <ColorButton label="正值颜色" bar="bg-[#70ad47]" />
        <ColorButton label="负值颜色" bar="bg-[#ed7d31]" />
      </div>
      <div className="-mt-[3px] flex h-[29px] items-center pr-[25px] pl-[51px]">
        <label htmlFor="alpha">透明度<Key k="T" /></label>
        <input
          id="alpha"
          type="range"
          defaultValue="0"
          className="ml-[14px] h-3 w-[51px] appearance-none bg-transparent [&::-webkit-slider-runnable-track]:h-[2px] [&::-webkit-slider-runnable-track]:bg-[#8f979f] [&::-webkit-slider-thumb]:-mt-[5px] [&::-webkit-slider-thumb]:h-3 [&::-webkit-slider-thumb]:w-[3px] [&::-webkit-slider-thumb]:appearance-none [&::-webkit-slider-thumb]:bg-[#6b7178]"
        />
        <div className="ml-auto flex h-[29px] w-[127px] items-center rounded-[5px] border border-[#b5b5b5] bg-white pr-[7px]">
          <input aria-label="透明度百分比" defaultValue="0%" className="min-w-0 flex-1 pl-[6px] text-base outline-none" />
          <span className="flex flex-col gap-[10px]">
            <Btn label="增加"><Chev up c={D} /></Btn>
            <Btn label="减少"><Chev c={D} /></Btn>
          </span>
        </div>
      </div>
      <h3 className="mt-[21px] font-bold text-[#262626]">
        <button type="button" className="flex h-[22px] items-center gap-2 pl-[24px]">
          <Svg w={8} h={12}><path d="M1 0L7 6L1 12" stroke={D} /></Svg>边框
        </button>
      </h3>
      <div className="mt-auto pb-[2px] pl-[29px] whitespace-nowrap text-[#b3b3b3]">
        <p className="text-[26px] leading-[32px]">激活 Windows</p>
        <p className="text-[18px] leading-[26px]">转到“设置”以激活 Windows。</p>
      </div>
    </aside>
  );
}

function ScrollBar() {
  return (
    <div className="flex w-[26px] shrink-0 flex-col items-center bg-[#f5f5f5] pt-[14px] pb-2">
      <Btn label="向上滚动"><Svg w={12} h={9}><path d="M6 0L11.500 9H.5z" fill="#6e6e6e" stroke="none" /></Svg></Btn>
      <div className="mt-[6px] mb-[18px] w-[10px] flex-1 rounded-full bg-[#6e6e6e]" />
      <Btn label="向下滚动"><Svg w={11} h={9}><path d="M5.500 9L0 0H11z" fill="#6e6e6e" stroke="none" /></Svg></Btn>
    </div>
  );
}

export default function App() {
  return (
    <div className="flex h-screen flex-col overflow-hidden bg-[#efefef] font-['Noto_Sans','Noto_Sans_CJK_SC',sans-serif]">
      <TitleBar />
      <Tabs />
      <Ribbon />
      <FormulaBar />
      <main className="flex min-h-0 flex-1">
        <div className="flex min-w-0 flex-1 flex-col overflow-hidden border-r border-[#bdbdbd]">
          <SheetTable />
          <SheetBody />
          <footer className="relative z-10 flex h-[3px] shrink-0 bg-white">
            <span className="w-[518px] border-t border-[#aaa]" />
            <span className="w-[76px]" />
            <span className="flex-1 border-t border-[#aaa] bg-[#f3f3f3]" />
          </footer>
        </div>
        <ScrollBar />
        <Pane />
      </main>
    </div>
  );
}
